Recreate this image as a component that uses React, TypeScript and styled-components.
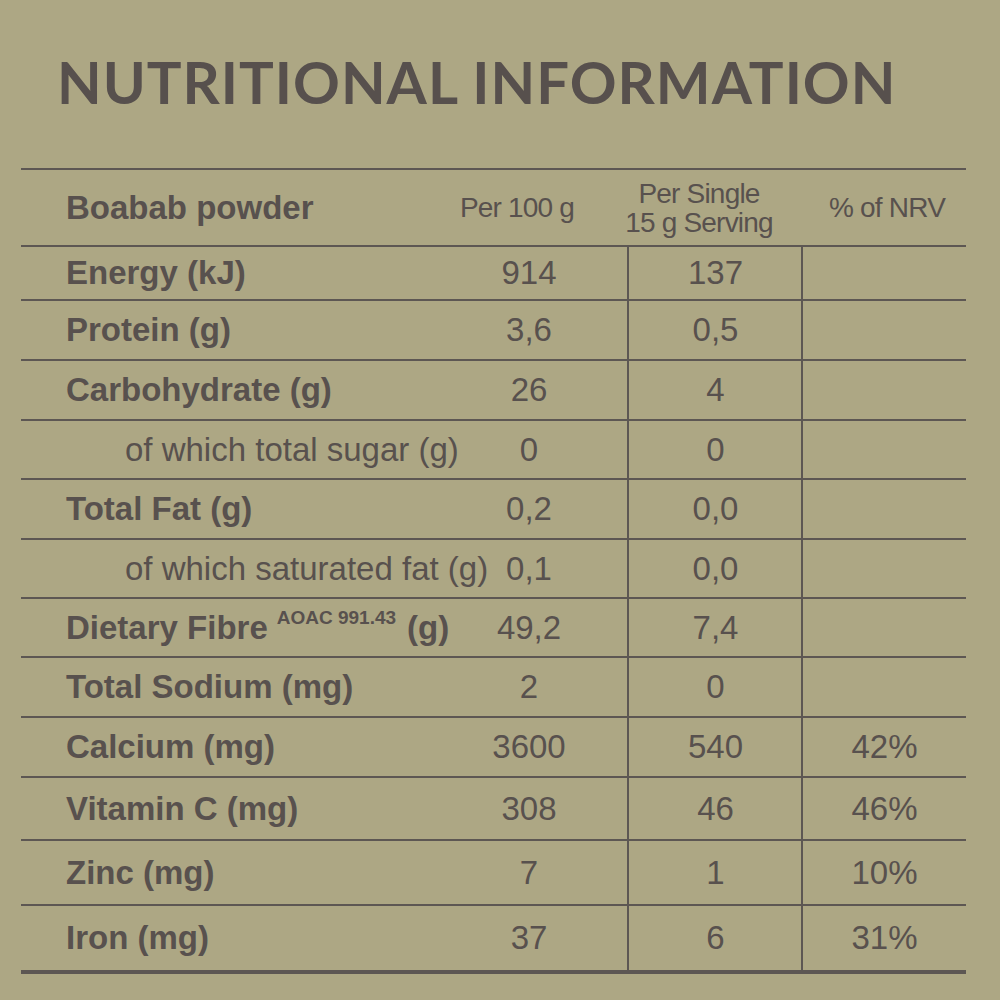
import React from "react";
import styled, { createGlobalStyle } from "styled-components";

const Global = createGlobalStyle`
  html, body { margin: 0; padding: 0; background: #ada784; }
  #root { width: 1000px; height: 1000px; }
`;

const LINE = "#5d5753";

const Page = styled.div`
  width: 1000px;
  height: 1000px;
  box-sizing: border-box;
  background: #ada784;
  color: #58514e;
  padding: 50px 34px 0 21px;
  font-family: "Liberation Sans", Arial, sans-serif;
`;

const Title = styled.h1`
  margin: 0 0 0 36px;
  font-family: Lato, "Open Sans", sans-serif;
  font-weight: 700;
  font-size: 58px;
  line-height: 64px;
  letter-spacing: 1px;
  color: #57504d;
  white-space: nowrap;
`;

const Table = styled.div`
  margin-top: 54px;
  width: 945px;
  border-top: 2px solid ${LINE};
  border-bottom: 4px solid ${LINE};
`;

const Row = styled.div<{ $h: number; $last?: boolean }>`
  display: grid;
  grid-template-columns: 409px 198px 174px 164px;
  height: ${(p) => p.$h}px;
  box-sizing: border-box;
  border-bottom: ${(p) => (p.$last ? "none" : `2px solid ${LINE}`)};
`;

const Label = styled.div<{ $indent?: boolean; $bold?: boolean }>`
  display: flex;
  align-items: center;
  padding-left: ${(p) => (p.$indent ? 104 : 45)}px;
  font-size: 33px;
  font-weight: ${(p) => (p.$bold ? 700 : 400)};
  white-space: nowrap;
  overflow: visible;
`;

const Sup = styled.span`
  font-size: 19px;
  font-weight: 700;
  position: relative;
  top: -10px;
  margin: 0 11px 0 9px;
`;

const Value = styled.div<{ $line?: boolean }>`
  display: flex;
  align-items: center;
  justify-content: center;
  font-size: 33px;
  border-left: ${(p) => (p.$line ? `2px solid ${LINE}` : "none")};
  margin-left: ${(p) => (p.$line ? "-1px" : "0")};
`;

const HeadCell = styled.div<{ $padL?: number; $padR?: number }>`
  display: flex;
  align-items: center;
  justify-content: center;
  text-align: center;
  white-space: nowrap;
  font-size: 28px;
  letter-spacing: -0.8px;
  line-height: 29px;
  padding-left: ${(p) => p.$padL ?? 0}px;
  padding-right: ${(p) => p.$padR ?? 0}px;
`;

type R = {
  label: React.ReactNode;
  indent?: boolean;
  a: string;
  b: string;
  c: string;
  h: number;
};

const rows: R[] = [
  { label: "Energy (kJ)", a: "914", b: "137", c: "", h: 54 },
  { label: "Protein (g)", a: "3,6", b: "0,5", c: "", h: 60 },
  { label: "Carbohydrate (g)", a: "26", b: "4", c: "", h: 60 },
  { label: "of which total sugar (g)", indent: true, a: "0", b: "0", c: "", h: 59 },
  { label: "Total Fat (g)", a: "0,2", b: "0,0", c: "", h: 60 },
  { label: "of which saturated fat (g)", indent: true, a: "0,1", b: "0,0", c: "", h: 59 },
  {
    label: (
      <>
        Dietary Fibre<Sup>AOAC 991.43</Sup>(g)
      </>
    ),
    a: "49,2",
    b: "7,4",
    c: "",
    h: 59,
  },
  { label: "Total Sodium (mg)", a: "2", b: "0", c: "", h: 60 },
  { label: "Calcium (mg)", a: "3600", b: "540", c: "42%", h: 60 },
  { label: "Vitamin C (mg)", a: "308", b: "46", c: "46%", h: 63 },
  { label: "Zinc (mg)", a: "7", b: "1", c: "10%", h: 65 },
  { label: "Iron (mg)", a: "37", b: "6", c: "31%", h: 64 },
];

export default function App() {
  return (
    <>
      <Global />
      <Page>
        <Title>NUTRITIONAL INFORMATION</Title>
        <Table>
          <Row $h={77}>
            <Label $bold>Boabab powder</Label>
            <HeadCell $padR={24}>Per 100 g</HeadCell>
            <HeadCell $padR={32}>
              Per Single
              <br />
              15 g Serving
            </HeadCell>
            <HeadCell $padL={6}>% of NRV</HeadCell>
          </Row>
          {rows.map((r, i) => (
            <Row key={i} $h={r.h} $last={i === rows.length - 1}>
              <Label $bold={!r.indent} $indent={r.indent}>
                {r.label}
              </Label>
              <Value>{r.a}</Value>
              <Value $line>{r.b}</Value>
              <Value $line>{r.c}</Value>
            </Row>
          ))}
        </Table>
      </Page>
    </>
  );
}
